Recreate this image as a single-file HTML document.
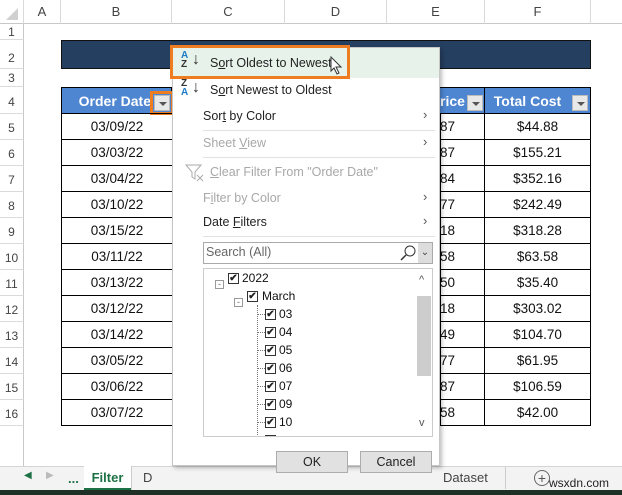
<!DOCTYPE html>
<html><head><style>
*{margin:0;padding:0;box-sizing:border-box}
body{width:622px;height:495px;overflow:hidden;background:#fff;font-family:"Liberation Sans",Calibri,sans-serif;position:relative;font-size:13px;color:#222}
.a{position:absolute}
.ch{top:0;height:24px;background:#fff;border-bottom:1px solid #c8c8c8;color:#444;font-size:13px;text-align:center;line-height:24px;border-right:1px solid #dadada}
.rh{left:0;width:24px;color:#444;font-size:12px;text-align:center;border-bottom:1px solid #dadada;border-right:1px solid #c8c8c8}
.cell{border:1px solid #000;text-align:center;font-size:13.5px;color:#111}
.hd{background:#4f86d1;color:#fff;font-weight:bold;font-size:14px;text-align:center;line-height:26px}
.dd{width:16px;height:16px;background:#e8e8e8;border:1px solid #bbb}
.dd:after{content:"";position:absolute;left:4px;top:6px;border:4px solid transparent;border-top:4px solid #555}
.mi{left:30px;font-size:12.5px;color:#222}
.dis{color:#a8a8a8}
.sep{left:30px;width:232px;height:1px;background:#e2e2e2}
.arr{left:250px;color:#555;font-size:13px}
.cb{width:11px;height:11px;border:1px solid #333;background:#fff;font-size:10px;line-height:9px;text-align:center;font-weight:bold}
.tr{font-size:12px;color:#111}
</style></head><body>
<div class="a ch" style="left:0;width:24px;background:#fff"></div>
<div class="a" style="left:6px;top:8px;width:0;height:0;border-left:12px solid transparent;border-bottom:12px solid #d0d0d0"></div>
<div class="a ch" style="left:24px;width:37px">A</div>
<div class="a ch" style="left:61px;width:111px">B</div>
<div class="a ch" style="left:172px;width:113px">C</div>
<div class="a ch" style="left:285px;width:102px">D</div>
<div class="a ch" style="left:387px;width:98px">E</div>
<div class="a ch" style="left:485px;width:106px">F</div>
<div class="a ch" style="left:591px;width:31px;border-right:none"></div>
<div class="a rh" style="top:24px;height:16px;line-height:16px">1</div>
<div class="a rh" style="top:40px;height:29px;line-height:36px">2</div>
<div class="a rh" style="top:69px;height:18px;line-height:18px">3</div>
<div class="a rh" style="top:87px;height:27px;line-height:30px">4</div>
<div class="a rh" style="top:114px;height:26px;line-height:28px">5</div>
<div class="a rh" style="top:140px;height:26px;line-height:28px">6</div>
<div class="a rh" style="top:166px;height:26px;line-height:28px">7</div>
<div class="a rh" style="top:192px;height:26px;line-height:28px">8</div>
<div class="a rh" style="top:218px;height:26px;line-height:28px">9</div>
<div class="a rh" style="top:244px;height:26px;line-height:28px">10</div>
<div class="a rh" style="top:270px;height:26px;line-height:28px">11</div>
<div class="a rh" style="top:296px;height:26px;line-height:28px">12</div>
<div class="a rh" style="top:322px;height:26px;line-height:28px">13</div>
<div class="a rh" style="top:348px;height:26px;line-height:28px">14</div>
<div class="a rh" style="top:374px;height:26px;line-height:28px">15</div>
<div class="a rh" style="top:400px;height:26px;line-height:28px">16</div>
<div class="a rh" style="top:426px;height:40px;border-bottom:none"></div>
<div class="a" style="left:61px;top:40px;width:530px;height:29px;background:#253f60;border:1px solid #111"></div>
<div class="a hd" style="left:61px;top:87px;width:111px;height:27px;border:1px solid #000;padding-right:20px;text-align:right">Order Date</div>
<div class="a dd" style="left:154px;top:95px"></div>
<div class="a" style="left:150px;top:91px;width:24px;height:24px;border:3px solid #ee7d22"></div>
<div class="a hd" style="left:440px;top:87px;width:45px;height:27px;border-top:1px solid #000;border-bottom:1px solid #000;text-align:left;overflow:hidden;white-space:nowrap">rice</div>
<div class="a dd" style="left:467px;top:95px"></div>
<div class="a hd" style="left:484px;top:87px;width:107px;height:27px;border:1px solid #000;padding-right:20px">Total Cost</div>
<div class="a dd" style="left:572px;top:95px"></div>
<div id="rows"></div>
<script>
var d=["03/09/22","03/03/22","03/04/22","03/10/22","03/15/22","03/11/22","03/13/22","03/12/22","03/14/22","03/05/22","03/06/22","03/07/22"];
var e=["87","87","84","77","18","58","50","18","49","77","87","58"];
var f=["$44.88","$155.21","$352.16","$242.49","$318.28","$63.58","$35.40","$303.02","$104.70","$61.95","$106.59","$42.00"];
var h="";
for(var i=0;i<12;i++){var t=113+i*26;
h+='<div class="a cell" style="left:61px;top:'+t+'px;width:112px;height:27px;line-height:26px">'+d[i]+'</div>';
h+='<div class="a cell" style="left:172px;top:'+t+'px;width:269px;height:27px"></div>';
h+='<div class="a cell" style="left:440px;top:'+t+'px;width:45px;height:27px;line-height:26px;text-align:left;border-left:none">'+e[i]+'</div>';
h+='<div class="a cell" style="left:484px;top:'+t+'px;width:107px;height:27px;line-height:26px">'+f[i]+'</div>';}
document.getElementById("rows").innerHTML=h;
</script>
<!-- tabs -->
<div class="a" style="left:0;top:466px;width:622px;height:24px;background:#f3f3f3;border-top:1px solid #d4d4d4"></div>
<div class="a" style="left:24px;top:470px;font-size:10px;color:#1e7145">◀</div>
<div class="a" style="left:46px;top:470px;font-size:10px;color:#bbb">▶</div>
<div class="a" style="left:68px;top:471px;font-size:13px;color:#1e7145;font-weight:bold">...</div>
<div class="a" style="left:84px;top:466px;width:47px;height:24px;background:#fff;border-bottom:2px solid #1e7145;text-align:center;font-weight:bold;color:#1e7145;line-height:24px">Filter</div>
<div class="a" style="left:131px;top:466px;width:1px;height:24px;background:#ccc"></div>
<div class="a" style="left:143px;top:470px;color:#444">D</div>
<div class="a" style="left:443px;top:470px;color:#444">Dataset</div>
<div class="a" style="left:505px;top:467px;width:1px;height:22px;background:#ccc"></div>
<div class="a" style="left:534px;top:470px;width:16px;height:16px;border:1px solid #666;border-radius:50%;text-align:center;line-height:14px;color:#555;font-size:14px">+</div>
<div class="a" style="left:549px;top:476px;font-size:12px;color:#222">wsxdn.com</div>
<div class="a" style="left:0;top:490px;width:622px;height:5px;background:#1f3026"></div>
<!-- menu -->
<div class="a" style="left:172px;top:47px;width:268px;height:419px;background:#fff;border:1px solid #c6c6c6;box-shadow:2px 2px 4px rgba(0,0,0,.25)">
 <div class="a" style="left:0;top:0;width:266px;height:30px;background:#e6f2ea"></div>
 <div class="a" style="left:8px;top:3px;font-size:10px;line-height:9px;color:#1e7bc4;font-weight:bold">A<br><span style="color:#333">Z</span></div>
 <div class="a" style="left:19px;top:3px;font-size:16px;color:#333">↓</div>
 <div class="a mi" style="left:37px;top:8px">S<u>o</u>rt Oldest to Newest</div>
 <svg class="a" style="left:156px;top:8px" width="16" height="20"><path d="M2 1v14l3-3 3 6 2-1-3-6h5z" fill="#fff" stroke="#333"/></svg>
 <div class="a" style="left:8px;top:31px;font-size:10px;line-height:9px;color:#333;font-weight:bold">Z<br><span style="color:#1e7bc4">A</span></div>
 <div class="a" style="left:19px;top:31px;font-size:16px;color:#333">↓</div>
 <div class="a mi" style="left:37px;top:35px">S<u>o</u>rt Newest to Oldest</div>
 <div class="a mi" style="top:61px">Sor<u>t</u> by Color</div><div class="a arr" style="top:59px">›</div>
 <div class="a sep" style="top:82px"></div>
 <div class="a mi dis" style="top:88px">Sheet <u>V</u>iew</div><div class="a arr dis" style="top:86px">›</div>
 <div class="a sep" style="top:109px"></div>
 <svg class="a" style="left:12px;top:115px" width="20" height="20"><path d="M1 2h15l-6 7v7l-3-2v-5z" fill="none" stroke="#aaa"/><path d="M12 12l6 6M18 12l-6 6" stroke="#aaa"/></svg>
 <div class="a mi dis" style="left:37px;top:117px"><u>C</u>lear Filter From "Order Date"</div>
 <div class="a mi dis" style="top:143px">F<u>i</u>lter by Color</div><div class="a arr dis" style="top:141px">›</div>
 <div class="a mi" style="top:167px">Date <u>F</u>ilters</div><div class="a arr" style="top:165px">›</div>
 <div class="a sep" style="top:188px"></div>
 <div class="a" style="left:30px;top:194px;width:230px;height:22px;border:1px solid #aaa"></div>
 <div class="a" style="left:33px;top:197px;font-size:12.5px;color:#666">Search (All)</div>
 <svg class="a" style="left:226px;top:196px" width="18" height="18"><circle cx="11" cy="7" r="5" fill="none" stroke="#333"/><path d="M7 11l-5 5" stroke="#333" stroke-width="1.5"/></svg>
 <div class="a" style="left:245px;top:195px;width:14px;height:20px;background:#ddd;color:#444;font-size:10px;text-align:center;line-height:20px">⌄</div>
 <div class="a" style="left:30px;top:220px;width:230px;height:169px;border:1px solid #ccc;overflow:hidden">
  <div class="a" style="left:213px;top:27px;width:14px;height:80px;background:#cdcdcd"></div>
  <div class="a" style="left:215px;top:5px;font-size:11px;color:#555">^</div>
  <div class="a" style="left:215px;top:148px;font-size:11px;color:#555">v</div>
  <div class="a" style="left:11px;top:11px;width:9px;height:9px;border:1px solid #999;font-size:9px;line-height:6px;text-align:center;color:#666">-</div>
  <div class="a cb" style="left:24px;top:4px">✔</div><div class="a tr" style="left:38px;top:2px">2022</div>
  <div class="a" style="left:30px;top:29px;width:9px;height:9px;border:1px solid #999;font-size:9px;line-height:6px;text-align:center;color:#666">-</div>
  <div class="a cb" style="left:43px;top:22px">✔</div><div class="a tr" style="left:58px;top:20px">March</div>
  <div class="a" style="left:53px;top:36px;height:134px;border-left:1px dotted #777"></div>
  <div id="days"></div>
 </div>
 <div class="a" style="left:103px;top:403px;width:72px;height:22px;background:#e1e1e1;border:1px solid #adadad;text-align:center;line-height:20px;font-size:12.5px">OK</div>
 <div class="a" style="left:187px;top:403px;width:72px;height:22px;background:#e1e1e1;border:1px solid #adadad;text-align:center;line-height:20px;font-size:12.5px">Cancel</div>
 <div class="a" style="left:0;top:398px;width:266px;height:1px"></div>
</div>
<script>
var ds=["03","04","05","06","07","09","10",""],hh="";
for(var j=0;j<8;j++){var y=40+j*18;
hh+='<div class="a" style="left:54px;top:'+(y+5)+'px;width:7px;border-top:1px dotted #777"></div><div class="a cb" style="left:61px;top:'+y+'px">✔</div><div class="a tr" style="left:75px;top:'+(y-2)+'px">'+ds[j]+'</div>';}
document.getElementById("days").innerHTML=hh;
</script>
<div class="a" style="left:170px;top:45px;width:180px;height:34px;border:3px solid #ee7d22"></div>
</body></html>
